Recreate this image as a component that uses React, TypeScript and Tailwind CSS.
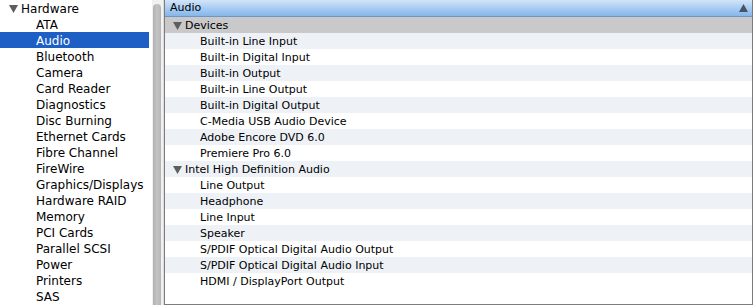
const hardware = [
  'ATA',
  'Audio',
  'Bluetooth',
  'Camera',
  'Card Reader',
  'Diagnostics',
  'Disc Burning',
  'Ethernet Cards',
  'Fibre Channel',
  'FireWire',
  'Graphics/Displays',
  'Hardware RAID',
  'Memory',
  'PCI Cards',
  'Parallel SCSI',
  'Power',
  'Printers',
  'SAS',
];

const groups = [
  {
    name: 'Devices',
    items: [
      'Built-in Line Input',
      'Built-in Digital Input',
      'Built-in Output',
      'Built-in Line Output',
      'Built-in Digital Output',
      'C-Media USB Audio Device',
      'Adobe Encore DVD 6.0',
      'Premiere Pro 6.0',
    ],
  },
  {
    name: 'Intel High Definition Audio',
    items: [
      'Line Output',
      'Headphone',
      'Line Input',
      'Speaker',
      'S/PDIF Optical Digital Audio Output',
      'S/PDIF Optical Digital Audio Input',
      'HDMI / DisplayPort Output',
    ],
  },
];

function Disclosure() {
  return (
    <svg width="9" height="8" viewBox="0 0 9 8" className="shrink-0">
      <path d="M0 0 H9 L4.5 8 Z" fill="#5e5e5e" />
    </svg>
  );
}

export default function App() {
  // flatten the right-hand outline so every row gets its stripe
  const rows: { label: string; group: boolean }[] = [];
  groups.forEach((g) => {
    rows.push({ label: g.name, group: true });
    g.items.forEach((item) => rows.push({ label: item, group: false }));
  });

  return (
    <div
      className="flex w-[753px] h-[305px] overflow-hidden bg-white text-[11px] leading-[16px] text-black"
      style={{ fontFamily: '"DejaVu Sans", "Liberation Sans", sans-serif' }}
    >
      {/* Sidebar */}
      <div className="w-[149px] shrink-0 flex flex-col text-[12px]">
        <div className="h-[16px] flex items-center gap-[3px] pl-[9px] pt-[1px]">
          <Disclosure />
          <span>Hardware</span>
        </div>
        {hardware.map((name) => (
          <div
            key={name}
            className={
              name === 'Audio'
                ? 'h-[16px] flex items-center pl-[36px] pt-[1px] bg-[#1d5fc5] text-white'
                : 'h-[16px] flex items-center pl-[36px] pt-[1px]'
            }
          >
            {name}
          </div>
        ))}
      </div>

      {/* Scroll track */}
      <div className="w-[15px] shrink-0 flex border-r border-[#dcdcdc]">
        <div className="w-[3px] bg-white" />
        <div className="flex-1 bg-[#f1f1f1] pt-[4px] pl-[1px]">
          <div className="w-[8px] h-[320px] rounded-full bg-gradient-to-r from-[#b0b0b0] via-[#c4c4c4] to-[#b4b4b4]" />
        </div>
      </div>

      {/* Detail pane */}
      <div className="flex-1 flex flex-col border-l border-r border-b border-[#7c7c7c]">
        <div className="h-[17px] shrink-0 flex items-center justify-between pl-[5px] pr-[4px] bg-gradient-to-b from-[#d3e5f8] via-[#a9cdf3] to-[#86b6ea] border-b border-[#6d95c9]">
          <span>Audio</span>
          <svg width="9" height="8" viewBox="0 0 9 8">
            <path d="M4.5 0 L9 8 H0 Z" fill="#43546b" />
          </svg>
        </div>
        <div className="h-[16px] shrink-0 flex items-center gap-[3px] pl-[8px] pt-[1px] bg-[#c9c9c9]">
          <Disclosure />
          <span>Devices</span>
        </div>
        {rows.slice(1).map((row, i) => (
          <div
            key={row.label}
            className={`h-[16px] shrink-0 flex items-center pt-[1px] ${
              i % 2 === 0 ? 'bg-[#eef2f7]' : 'bg-white'
            } ${row.group ? 'gap-[3px] pl-[8px]' : 'pl-[35px]'}`}
          >
            {row.group && <Disclosure />}
            <span>{row.label}</span>
          </div>
        ))}
        <div className="flex-1 bg-white" />
      </div>
    </div>
  );
}
